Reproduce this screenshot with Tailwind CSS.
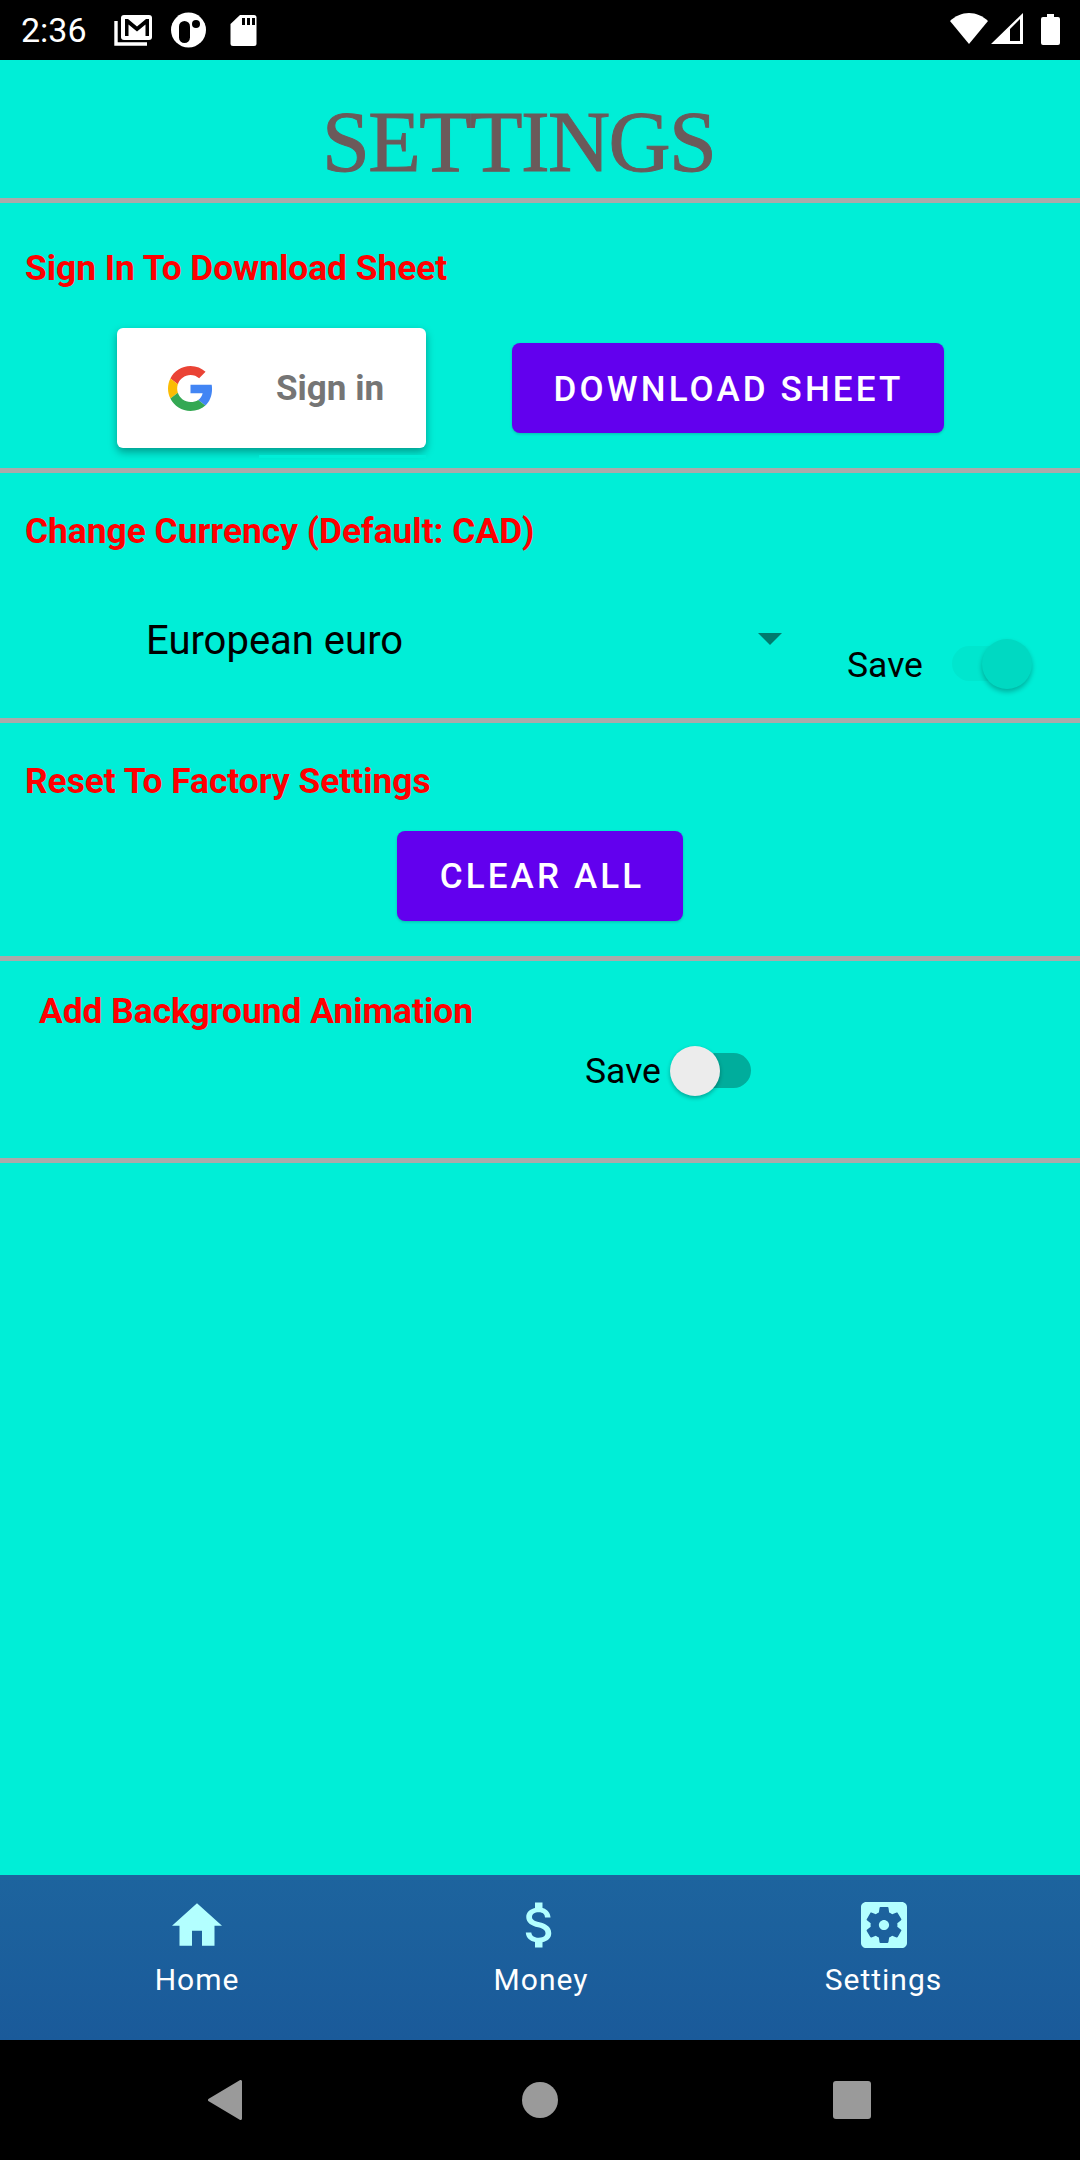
<!DOCTYPE html>
<html lang="en">
<head>
  <meta charset="UTF-8" />
  <meta name="viewport" content="width=device-width, initial-scale=1.0"/>
  <title>Settings</title>
  <script src="https://cdn.jsdelivr.net/npm/@tailwindcss/browser@4"></script>
</head>
<body class="w-[1080px] h-[2160px] bg-[#00eed7] font-['Roboto',sans-serif] overflow-hidden">
  <div class="flex flex-col h-[2160px]">

    <!-- status bar -->
    <div class="h-[60px] bg-black flex items-center text-white shrink-0">
      <span class="ml-[21px] w-[93px] text-[34px] leading-none font-normal">2:36</span>
      <svg class="w-[150px] h-[40px]" viewBox="114 10 150 40">
        <path fill="#fff" d="M124 15h25a3 3 0 0 1 3 3v19a3 3 0 0 1-3 3h-25a3 3 0 0 1-3-3V18a3 3 0 0 1 3-3z"/>
        <path fill="#000" d="M125 19h3l9 7.500 9-7.500h3v17h-3.500V24.500l-8.500 7-8.500-7V36H125z"/>
        <path fill="none" stroke="#fff" stroke-width="3.4" d="M116 21v23h31"/>
        <circle cx="188.500" cy="30" r="17.500" fill="#fff"/>
        <rect x="179" y="21" width="11" height="22" rx="5.500" fill="#000"/>
        <circle cx="196" cy="24" r="4" fill="#000"/>
        <path fill="#fff" d="M240 15h14a2.500 2.500 0 0 1 2.500 2.500v26a2.500 2.500 0 0 1-2.500 2.500h-21a2.500 2.500 0 0 1-2.500-2.500V24z"/>
        <path fill="#000" d="M242 18h3v7h-3zM247 18h3v7h-3zM252 18h3v7h-3z"/>
      </svg>
      <svg class="ml-[686px] w-[110px] h-[40px]" viewBox="950 10 110 40">
        <path fill="#fff" d="M950 21c5-5 12-8 19-8s14 3 19 8l-19 23z"/>
        <path fill="#fff" d="M991 44l32-31v31zm19-3h10V19l-10 10z" fill-rule="evenodd"/>
        <path fill="#fff" d="M1047 17v-3h7v3h4a2 2 0 0 1 2 2v24a2 2 0 0 1-2 2h-15a2 2 0 0 1-2-2V19a2 2 0 0 1 2-2z"/>
      </svg>
    </div>

    <!-- title -->
    <div class="h-[138px] shrink-0 pl-[322px] pt-[38px]">
      <h1 class="font-['Liberation_Serif',serif] text-[86px] leading-[88px] tracking-[-1.600px] text-[#6b5a5a] [-webkit-text-stroke:1px_#6b5a5a]">SETTINGS</h1>
    </div>
    <div class="h-[5px] bg-[#aaaaaa] shrink-0"></div>

    <!-- sign in -->
    <section class="h-[265px] shrink-0 pt-[45px]">
      <h2 class="pl-[25px] text-[35.300px] leading-[40px] font-bold text-[#ff0000]">Sign In To Download Sheet</h2>
      <div class="flex items-start mt-[40px] pl-[117px]">
        <div class="relative w-[309px] h-[120px] bg-white rounded-[6px] shadow-[0_4px_8px_rgba(0,0,0,0.35)] flex items-center pl-[51px]">
          <svg class="w-[45px] h-[45px]" viewBox="0 0 48 48">
            <path fill="#EA4335" d="M24 9.500c3.540 0 6.710 1.220 9.210 3.600l6.850-6.850C35.900 2.380 30.470 0 24 0 14.620 0 6.510 5.380 2.560 13.220l7.980 6.190C12.430 13.720 17.740 9.500 24 9.500z"/>
            <path fill="#4285F4" d="M46.980 24.550c0-1.570-.15-3.090-.38-4.550H24v9.020h12.940c-.58 2.960-2.260 5.480-4.780 7.180l7.730 6c4.510-4.180 7.090-10.360 7.090-17.650z"/>
            <path fill="#FBBC05" d="M10.530 28.590c-.48-1.450-.76-2.990-.76-4.590s.27-3.140.76-4.590l-7.980-6.190C.92 16.460 0 20.120 0 24c0 3.880.92 7.540 2.560 10.780l7.970-6.190z"/>
            <path fill="#34A853" d="M24 48c6.480 0 11.930-2.130 15.890-5.810l-7.730-6c-2.150 1.450-4.920 2.300-8.160 2.300-6.260 0-11.570-4.220-13.470-9.910l-7.980 6.190C6.510 42.620 14.620 48 24 48z"/>
          </svg>
          <span class="ml-[63px] mt-[3px] text-[35px] font-bold text-[#757575]">Sign in</span>
          <div class="absolute left-[142px] top-[127px] w-[167px] h-[3px] bg-[#00eed7]"></div>
        </div>
        <button class="ml-[86px] mt-[15px] w-[432px] h-[90px] pt-[4px] pl-[1px] bg-[#6200ee] rounded-[8px] text-white text-[35px] font-medium tracking-[3.120px] shadow-[0_1px_3px_rgba(0,0,0,0.2)]">DOWNLOAD SHEET</button>
      </div>
    </section>
    <div class="h-[5px] bg-[#aaaaaa] shrink-0"></div>

    <!-- currency -->
    <section class="h-[245px] shrink-0 pt-[38px]">
      <h2 class="pl-[25px] text-[35.300px] leading-[40px] font-bold text-[#ff0000]">Change Currency (Default: CAD)</h2>
      <div class="flex items-start">
        <span class="ml-[146px] mt-[67px] w-[612px] text-[40px] leading-[46px] text-black">European euro</span>
        <div class="mt-[82px] w-0 h-0 border-x-[12px] border-x-transparent border-t-[12px] border-t-[#007a6d]"></div>
        <span class="ml-[65px] mt-[91px] w-[105px] text-[35.500px] leading-[46px] text-black">Save</span>
        <div class="relative mt-[95px] w-[70px] h-[35px] rounded-full bg-[#00e6ce]">
          <div class="absolute right-[-10px] top-[-7px] w-[50px] h-[50px] rounded-full bg-[#00d9c2] shadow-[0_3px_5px_rgba(0,0,0,0.25)]"></div>
        </div>
      </div>
    </section>
    <div class="h-[5px] bg-[#aaaaaa] shrink-0"></div>

    <!-- reset -->
    <section class="h-[233px] shrink-0 pt-[38px]">
      <h2 class="pl-[25px] text-[35.300px] leading-[40px] font-bold text-[#ff0000]">Reset To Factory Settings</h2>
      <button class="block mx-auto mt-[30px] w-[286px] h-[90px] pt-[2px] pl-[4px] bg-[#6200ee] rounded-[8px] text-white text-[35px] font-medium tracking-[3.120px] shadow-[0_1px_3px_rgba(0,0,0,0.2)]">CLEAR ALL</button>
    </section>
    <div class="h-[5px] bg-[#aaaaaa] shrink-0"></div>

    <!-- animation -->
    <section class="h-[197px] shrink-0 pt-[30px]">
      <h2 class="pl-[39px] text-[35.300px] leading-[40px] font-bold text-[#ff0000]">Add Background Animation</h2>
      <div class="flex items-center mt-[14px] pl-[585px] h-[50px]">
        <span class="w-[85px] pt-[2px] text-[35.500px] leading-[46px] text-black">Save</span>
        <div class="relative w-[70px] h-[35px] ml-[11px] rounded-full bg-[#00ad9c]">
          <div class="absolute left-[-11px] top-[-7px] w-[50px] h-[50px] rounded-full bg-[#ececec] shadow-[0_2px_4px_rgba(0,0,0,0.3)]"></div>
        </div>
      </div>
    </section>
    <div class="h-[5px] bg-[#aaaaaa] shrink-0"></div>

    <div class="flex-1"></div>

    <!-- bottom tabs -->
    <nav class="h-[165px] shrink-0 bg-gradient-to-b from-[#1d649e] to-[#1a5a9a] pl-[25px] grid grid-cols-[344px_344px_341px] text-white text-[30px] tracking-[1px]">
      <div class="flex flex-col items-center">
        <svg class="mt-[28px] w-[50px] h-[43px]" viewBox="2 3 20 17"><path fill="#b3ffff" d="M10 20v-6h4v6h5v-8h3L12 3 2 12h3v8z"/></svg>
        <span class="mt-[17px] leading-[34px]">Home</span>
      </div>
      <div class="flex flex-col items-center">
        <svg class="mt-[27px] mr-[3px] w-[30px] h-[46px]" viewBox="6 3 12 18"><path fill="#b3ffff" d="M11.800 10.900c-2.270-.59-3-1.200-3-2.150 0-1.090 1.010-1.850 2.700-1.850 1.780 0 2.440.85 2.500 2.100h2.210c-.07-1.720-1.120-3.300-3.210-3.810V3h-3v2.160c-1.940.42-3.500 1.680-3.500 3.610 0 2.310 1.910 3.460 4.700 4.130 2.500.6 3 1.480 3 2.410 0 .69-.49 1.790-2.700 1.790-2.060 0-2.870-.92-2.980-2.100h-2.200c.12 2.190 1.760 3.420 3.680 3.830V21h3v-2.150c1.950-.37 3.500-1.500 3.500-3.550 0-2.840-2.430-3.810-4.700-4.400z"/></svg>
        <span class="mt-[15px] leading-[34px]">Money</span>
      </div>
      <div class="flex flex-col items-center">
        <svg class="mt-[27px] w-[46px] h-[46px]" viewBox="3 3 18 18"><path fill="#b3ffff" d="M12 10c-1.100 0-2 .9-2 2s.9 2 2 2 2-.9 2-2-.9-2-2-2zm7-7H5c-1.110 0-2 .9-2 2v14c0 1.100.89 2 2 2h14c1.110 0 2-.9 2-2V5c0-1.100-.89-2-2-2zm-1.750 9c0 .23-.02.46-.05.68l1.480 1.160c.13.11.17.3.08.45l-1.400 2.420c-.09.15-.27.21-.43.15l-1.740-.7c-.36.28-.76.51-1.180.69l-.26 1.850c-.03.17-.18.3-.35.3h-2.800c-.17 0-.32-.13-.35-.29l-.26-1.850c-.43-.18-.82-.41-1.180-.69l-1.740.7c-.16.06-.34 0-.43-.15l-1.400-2.420c-.09-.15-.05-.34.08-.45l1.480-1.160c-.03-.23-.05-.46-.05-.69 0-.23.02-.46.05-.68l-1.480-1.160c-.13-.11-.17-.3-.08-.45l1.400-2.420c.09-.15.27-.21.43-.15l1.740.7c.36-.28.76-.51 1.180-.69l.26-1.850c.03-.17.18-.3.35-.3h2.800c.17 0 .32.13.35.29l.26 1.850c.43.18.82.41 1.180.69l1.740-.7c.16-.06.34 0 .43.15l1.400 2.420c.09.15.05.34-.08.45l-1.480 1.160c.03.23.05.46.05.69z"/></svg>
        <span class="mt-[15px] leading-[34px]">Settings</span>
      </div>
    </nav>

    <!-- android nav -->
    <div class="h-[120px] shrink-0 bg-black flex items-center pl-[208px]">
      <svg class="w-[34px] h-[40px]" viewBox="0 0 34 40"><path fill="#9a9a9a" stroke="#9a9a9a" stroke-width="3" stroke-linejoin="round" d="M32.500 1.500v37L1.500 20z"/></svg>
      <div class="ml-[280px] w-[36px] h-[36px] rounded-full bg-[#9a9a9a]"></div>
      <div class="ml-[275px] w-[38px] h-[38px] rounded-[3px] bg-[#9a9a9a]"></div>
    </div>
  </div>
</body>
</html>
